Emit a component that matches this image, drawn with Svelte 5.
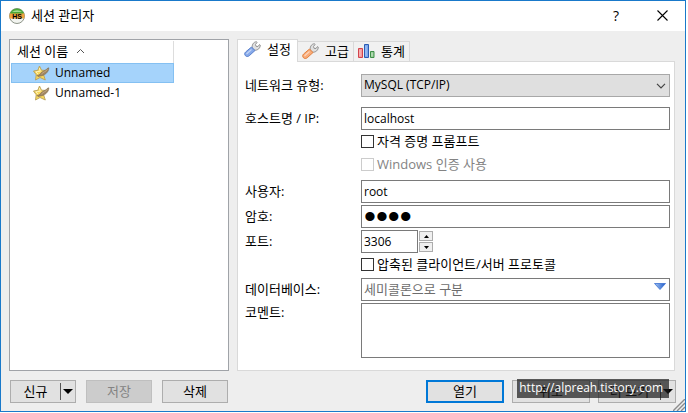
<script>
    let host = "localhost";
    let user = "root";
    let password = "root";
    let port = 3306;
    let database = "";
    let comment = "";
    let selected = "Unnamed";
    let activeTab = "settings";

    const sessions = ["Unnamed", "Unnamed-1"];
    const tabs = [
        { id: "settings", label: "설정" },
        { id: "advanced", label: "고급" },
        { id: "stats", label: "통계" },
    ];
</script>

<div class="window">
    <header>
        <svg class="logo" width="16" height="16" viewBox="0 0 16 16" aria-hidden="true">
            <circle cx="8" cy="8" r="7.500" fill="#f2f4f0" stroke="#8d9488" />
            <path d="M1 6.500a7 6 0 0 1 14 0z" fill="#4aa838" />
            <path d="M3 4a6 4 0 0 1 10 0z" fill="#a4dc8e" />
            <path d="M.8 5.500h14.400a9 9 0 0 1 0 5H.8a9 9 0 0 1 0-5z" fill="#f0a23c" />
            <text x="8" y="10.500" text-anchor="middle">HS</text>
        </svg>
        <h1>세션 관리자</h1>
        <button class="caption" aria-label="도움말">?</button>
        <button class="caption" aria-label="닫기">
            <svg width="11" height="11" viewBox="0 0 11 11">
                <path d="M.5.5l10 10M10.500.5l-10 10" stroke="#000" stroke-width="1.100" />
            </svg>
        </button>
    </header>

    <main>
        <section class="sessions">
            <button class="columnHeader">
                세션 이름
                <svg width="9" height="6" viewBox="0 0 9 6" aria-hidden="true">
                    <path d="M1 5l3.500-3.500L8 5" fill="none" stroke="#555" />
                </svg>
            </button>
            <ul>
                {#each sessions as name}
                    <li>
                        <button
                            class="session"
                            class:selected={selected === name}
                            on:click={() => (selected = name)}
                        >
                            <svg width="17" height="16" viewBox="0 0 17 16" aria-hidden="true">
                                <path
                                    d="M6.500 1l2 4.200 5.500.3-3.500 4 1.800 5.500-5.300-2.500L2.500 15l.7-5.200L.5 6l4.300-.7z"
                                    fill="#f7d65c"
                                    stroke="#b9a05a"
                                    stroke-width=".9"
                                />
                                <path d="M6.300 3l1 3.200-4.500.6 2.200 2.200" fill="none" stroke="#fff3b4" />
                                <path
                                    d="M15.800 2.800c0 2.500-1 4-2.500 5.500-2 2-4.800 2.700-8.300 3.200l-1-1c2-.2 3-1.300 4-2.700C9.500 6 12.500 6 14.200 3.500z"
                                    fill="#a08560"
                                    stroke="#7d6a4e"
                                    stroke-width=".6"
                                />
                                <path d="M14.500 4.500c-1.500 2-4.200 2.500-6 4.500" fill="none" stroke="#c9b08c" stroke-width=".8" />
                            </svg>
                            {name}
                        </button>
                    </li>
                {/each}
            </ul>
        </section>

        <section class="details">
            <div class="tabs" role="tablist">
                {#each tabs as tab}
                    <button
                        role="tab"
                        aria-selected={activeTab === tab.id}
                        class:active={activeTab === tab.id}
                        on:click={() => (activeTab = tab.id)}
                    >
                        {#if tab.id === "stats"}
                            <svg width="17" height="16" viewBox="0 0 17 16" aria-hidden="true">
                                <path d="M.5 5.500h4v9h-4z" fill="#f49a9c" stroke="#d2444c" />
                                <path d="M6.500 1.500h4v13h-4z" fill="#7aa6ec" stroke="#2c5cb4" />
                                <path d="M12.500 8.500h3.500v6h-3.500z" fill="#9cd09c" stroke="#3f8f48" />
                                <path d="M2 7v6M8 3v10M14 10v3" stroke="#fff" opacity=".4" />
                            </svg>
                        {:else}
                            <svg width="17" height="16" viewBox="0 0 17 16" aria-hidden="true">
                                <path
                                    d="M8.500 7.500C7.500 4.500 9 1 12.500.7l.5.8-1.500 2 .5 1.800 2 .2 1.500-2 .7.5c.3 3-2.500 5.500-5.500 5.200z"
                                    fill="#e0e0e0"
                                    stroke="#8b8b8b"
                                    stroke-width=".9"
                                />
                                <path
                                    class={tab.id}
                                    d="M7.500 6l3.500 3.500-5.800 5.300c-1.200 1-2.900.9-3.800-.1-1-1-.9-2.700.2-3.700z"
                                />
                                <path d="M7.500 8.500l-5 4.500" stroke="#fff" stroke-width="1.200" opacity=".5" />
                            </svg>
                        {/if}
                        {tab.label}
                    </button>
                {/each}
            </div>

            <form class="panel" on:submit|preventDefault>
                <div class="row spaced">
                    <label for="network">네트워크 유형:</label>
                    <div class="combo">
                        <select id="network">
                            <option>MySQL (TCP/IP)</option>
                        </select>
                        <svg class="chevron" width="10" height="6" viewBox="0 0 10 6" aria-hidden="true">
                            <path d="M1 .8l4 4 4-4" fill="none" stroke="#444" stroke-width="1.200" />
                        </svg>
                    </div>
                </div>
                <div class="row">
                    <label for="host">호스트명 / IP:</label>
                    <input id="host" type="text" bind:value={host} />
                </div>
                <div class="checks login">
                    <label><input type="checkbox" />자격 증명 프롬프트</label>
                    <label class="disabled"><input type="checkbox" disabled />Windows 인증 사용</label>
                </div>
                <div class="row">
                    <label for="user">사용자:</label>
                    <input id="user" type="text" bind:value={user} />
                </div>
                <div class="row">
                    <label for="password">암호:</label>
                    <input id="password" type="password" bind:value={password} />
                </div>
                <div class="row">
                    <label for="port">포트:</label>
                    <div class="port">
                        <input id="port" type="text" inputmode="numeric" bind:value={port} />
                        <div class="spinner">
                            <button type="button" aria-label="증가" on:click={() => port++}>
                                <svg width="5" height="3" viewBox="0 0 5 3"><path d="M0 3h5L2.500 0z" /></svg>
                            </button>
                            <button type="button" aria-label="감소" on:click={() => port--}>
                                <svg width="5" height="3" viewBox="0 0 5 3"><path d="M0 0h5L2.500 3z" /></svg>
                            </button>
                        </div>
                    </div>
                </div>
                <div class="checks">
                    <label><input type="checkbox" />압축된 클라이언트/서버 프로토콜</label>
                </div>
                <div class="row">
                    <label for="database">데이터베이스:</label>
                    <div class="combo">
                        <input id="database" type="text" placeholder="세미콜론으로 구분" bind:value={database} />
                        <button class="drop" type="button" aria-label="데이터베이스 선택">
                            <svg width="12" height="7" viewBox="0 0 12 7">
                                <defs>
                                    <linearGradient id="blue" x2="1">
                                        <stop stop-color="#a8c8f4" />
                                        <stop offset="1" stop-color="#1c58c8" />
                                    </linearGradient>
                                </defs>
                                <path d="M.5.5h11L6 6.500z" fill="url(#blue)" stroke="#3a70d0" stroke-width=".8" />
                            </svg>
                        </button>
                    </div>
                </div>
                <div class="row top">
                    <label for="comment">코멘트:</label>
                    <textarea id="comment" bind:value={comment}></textarea>
                </div>
            </form>
        </section>
    </main>

    <footer>
        <div class="left">
            <button class="split">
                <span>신규</span>
                <svg width="13" height="17" viewBox="0 0 13 17" aria-hidden="true">
                    <path d="M.5 0v17" stroke="#555" />
                    <path d="M3 6h10L8 11z" />
                </svg>
            </button>
            <button disabled>저장</button>
            <button>삭제</button>
        </div>
        <div class="right">
            <button class="primary">열기</button>
            <button>취소</button>
            <button class="split">
                <span>더 보기</span>
                <svg width="13" height="17" viewBox="0 0 13 17" aria-hidden="true">
                    <path d="M.5 0v17" stroke="#555" />
                    <path d="M3 6h10L8 11z" />
                </svg>
            </button>
            <div class="watermark">http://alpreah.tistory.com</div>
        </div>
        <svg class="grip" width="12" height="12" viewBox="0 0 12 12" aria-hidden="true">
            <path d="M0 12L12 0M4 12l8-8M8 12l4-4" stroke="#8c8c8c" stroke-width="1.400" />
        </svg>
    </footer>
</div>

<style>
    :global(body) {
        margin: 0;
        background: #fff;
    }

    .window {
        margin: 0 2px 1px 0;
        border: 1px solid #1979ca;
        background: #eee;
        position: relative;
        color: #000;
    }

    .window,
    button,
    input,
    select,
    textarea {
        font-family: "Open Sans", "Noto Sans CJK KR", sans-serif;
        font-size: 12px;
        line-height: 18px;
        box-sizing: border-box;
    }

    button {
        padding: 0;
        color: #000;
    }

    header {
        display: flex;
        align-items: center;
        height: 30px;
        padding-left: 8px;
        background: #fff;
    }

    h1 {
        flex: 1;
        margin: 0 0 0 6px;
        padding-bottom: 2px;
        font-size: 13px;
        font-weight: normal;
    }

    .logo text {
        font: bold 7px "Liberation Sans", sans-serif;
    }

    .caption {
        width: 46px;
        height: 30px;
        border: 0;
        background: none;
        font-size: 14px;
    }

    main {
        display: flex;
        gap: 8px;
        padding: 8px 10px 9px 8px;
    }

    .sessions {
        width: 220px;
        box-sizing: border-box;
        padding: 1px;
        border: 1px solid #a0a3a8;
        background: #fff;
    }

    .columnHeader {
        display: flex;
        align-items: center;
        gap: 8px;
        width: 163px;
        height: 22px;
        padding: 0 0 2px 6px;
        border: 0;
        border-right: 1px solid #ddd;
        background: none;
        font-size: 13px;
    }

    ul {
        margin: 0;
        padding: 0;
        list-style: none;
    }

    .session {
        display: flex;
        align-items: center;
        gap: 5px;
        width: 163px;
        height: 20px;
        padding-left: 21px;
        border: 1px solid transparent;
        background: none;
    }

    .session.selected {
        border-color: #84c0f2;
        background: #a5d3fb;
    }

    .details {
        flex: 1;
        min-width: 0;
    }

    .tabs {
        display: flex;
        align-items: flex-end;
        height: 22px;
    }

    .tabs button {
        display: flex;
        align-items: center;
        justify-content: center;
        gap: 6px;
        width: 56px;
        height: 20px;
        padding-bottom: 2px;
        border: 1px solid #d9d9d9;
        border-left: 0;
        border-bottom: 0;
        background: #f1f1f1;
        font-size: 13px;
    }

    .tabs button.active {
        position: relative;
        width: 61px;
        height: 23px;
        margin-bottom: -1px;
        padding-bottom: 4px;
        border-left: 1px solid #d9d9d9;
        background: #fff;
    }

    .settings {
        fill: #86a9ea;
        stroke: #5a80cc;
    }

    .advanced {
        fill: #f9ab78;
        stroke: #e2813f;
    }

    .panel {
        padding: 12px 4px 12px 7px;
        border: 1px solid #d9d9d9;
        background: #fff;
    }

    .row {
        display: grid;
        grid-template-columns: 116px 1fr;
        align-items: center;
        margin-bottom: 2px;
    }

    .row.spaced {
        margin-bottom: 10px;
    }

    .row.top {
        align-items: start;
        margin-bottom: 0;
    }

    .row label,
    .checks label {
        padding-bottom: 2px;
        font-size: 13px;
    }

    .panel input[type="text"],
    .panel input[type="password"],
    select,
    textarea {
        display: block;
        width: 100%;
        height: 23px;
        margin: 0;
        padding: 0 2px 1px;
        border: 1px solid #7a7a7a;
        border-radius: 0;
        background: #fff;
        color: #000;
        outline: none;
    }

    .panel textarea {
        height: 55px;
        resize: none;
    }

    .panel select {
        appearance: none;
        border-color: #a8a8a8;
        background: #dfdfdf;
    }

    .panel input[type="password"] {
        font-family: "Liberation Sans", sans-serif;
        font-size: 34px;
    }

    input::placeholder {
        color: #6d6d6d;
        font-size: 13px;
        opacity: 1;
    }

    .combo {
        position: relative;
    }

    .chevron {
        position: absolute;
        right: 4px;
        top: 9px;
        pointer-events: none;
    }

    .drop {
        display: flex;
        position: absolute;
        right: 4px;
        top: 5px;
        border: 0;
        background: none;
    }

    .checks {
        margin: -2px 0 2px 116px;
    }

    .checks.login {
        margin-bottom: 4px;
    }

    .checks label {
        display: flex;
        align-items: center;
        gap: 3px;
        height: 23px;
        padding: 0;
        line-height: 23px;
    }

    .checks input {
        appearance: none;
        width: 13px;
        height: 13px;
        margin: 0;
        border: 1px solid #333;
        background: #fff;
    }

    .checks .disabled {
        color: #838383;
    }

    .checks input:disabled {
        border-color: #ccc;
    }

    .port {
        display: flex;
        gap: 1px;
    }

    .port input[type="text"] {
        width: 57px;
    }

    .spinner {
        display: flex;
        flex-direction: column;
        justify-content: center;
        gap: 1px;
    }

    .spinner button {
        display: flex;
        align-items: center;
        justify-content: center;
        width: 14px;
        height: 10px;
        border: 1px solid #acacac;
        background: #f0f0f0;
    }

    footer {
        display: flex;
        justify-content: space-between;
        padding: 0 9px 8px;
    }

    .left,
    .right {
        display: flex;
        gap: 10px;
        position: relative;
    }

    .right {
        gap: 8px;
    }

    footer button {
        width: 66px;
        height: 23px;
        padding-bottom: 2px;
        border: 1px solid #adadad;
        background: #e1e1e1;
        font-size: 13px;
    }

    .right button {
        width: 78px;
    }

    footer button:disabled {
        border-color: #bfbfbf;
        background: #ccc;
        color: #838383;
    }

    footer .primary {
        border: 2px solid #0078d7;
    }

    footer .split {
        display: flex;
        align-items: center;
        padding: 0 2px 0 0;
    }

    .split span {
        flex: 1;
        padding-bottom: 2px;
    }

    .watermark {
        position: absolute;
        right: 7px;
        top: -1px;
        padding: 0 6px 1px 2px;
        background: rgba(25, 25, 25, 0.7);
        color: #fff;
        font-size: 12px;
        white-space: nowrap;
    }

    .grip {
        position: absolute;
        right: 0;
        bottom: 0;
    }
</style>
